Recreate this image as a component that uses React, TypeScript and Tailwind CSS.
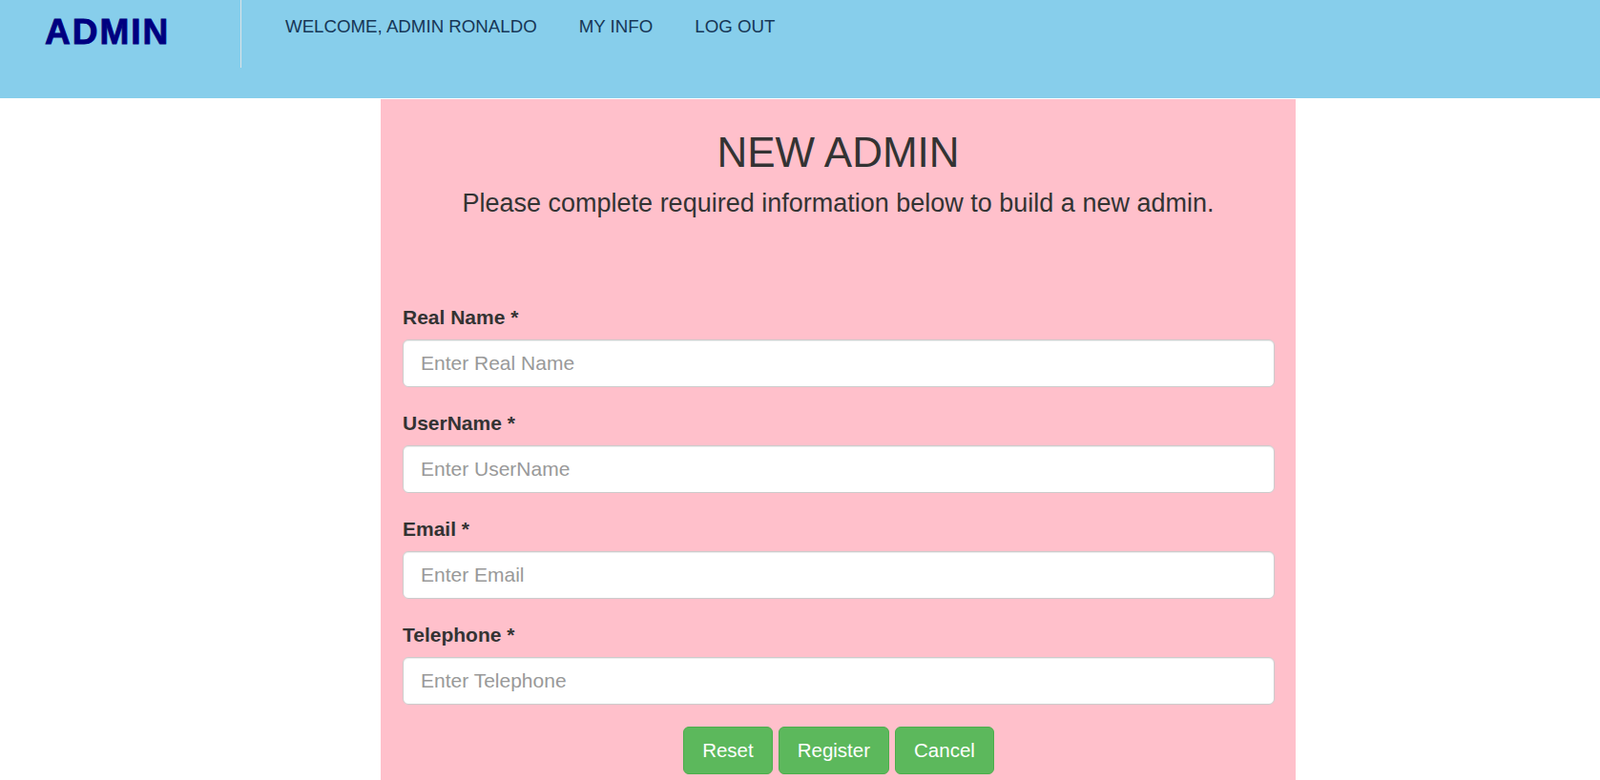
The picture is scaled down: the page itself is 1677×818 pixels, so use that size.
const fields = [
    { label: "Real Name", placeholder: "Enter Real Name" },
    { label: "UserName", placeholder: "Enter UserName" },
    { label: "Email", placeholder: "Enter Email" },
    { label: "Telephone", placeholder: "Enter Telephone" },
];

function Header() {
    return (
        <header className="h-[103px] bg-[#87ceeb] flex items-start">
            {/* logo */}
            <div className="w-[252px] pl-[47px] pt-[14px]">
                <span className="text-[37px] leading-[40px] font-black tracking-[2px] text-[#000080] [-webkit-text-stroke:0.9px_#000080]">
                    ADMIN
                </span>
            </div>
            <div className="w-px h-[71px] bg-[#dde3e6]" />

            {/* nav links */}
            <nav className="flex gap-[44px] pl-[46px] pt-[14px] text-[18.7px] leading-[27px] text-[#163656]">
                <a href="#">WELCOME, ADMIN RONALDO</a>
                <a href="#">MY INFO</a>
                <a href="#">LOG OUT</a>
            </nav>
        </header>
    );
}

export default function App() {
    return (
        <div className="min-h-[818px] bg-white font-['Liberation_Sans',Arial,sans-serif] text-[#333]">
            <Header />

            <div className="pl-[399px] pt-px">
                <main className="w-[959px] min-h-[714px] bg-[#ffc0cb] pt-[32px] px-[22px] pb-[10px]">
                    {/* TITLE */}
                    <div className="text-center">
                        <h1 className="text-[44px] leading-[48px]">NEW ADMIN</h1>
                        <p className="mt-[10px] text-[27px] leading-[38px]">
                            Please complete required information below to build a new admin.
                        </p>
                    </div>

                    {/* FORM */}
                    <form className="mt-[86px] pl-[1px]" onSubmit={(e) => e.preventDefault()}>
                        {fields.map((f) => (
                            <div key={f.label} className="mb-[23px]">
                                <label className="block mb-[8px] text-[21px] leading-[30px] font-bold">
                                    {f.label} *
                                </label>
                                <input
                                    type="text"
                                    placeholder={f.placeholder}
                                    className="block w-full h-[50px] px-[18px] text-[21px] bg-white border border-[#ccc] rounded-[6px] shadow-[inset_0_1px_1px_rgba(0,0,0,0.075)] placeholder:text-[#999] outline-none"
                                />
                            </div>
                        ))}

                        {/* BUTTONS */}
                        <div className="flex justify-center gap-[6px]">
                            <button type="reset" className="h-[50px] px-[19px] text-[20.5px] text-white bg-[#5cb85c] border border-[#4cae4c] rounded-[6px]">
                                Reset
                            </button>
                            <button type="submit" className="h-[50px] px-[19px] text-[20.5px] text-white bg-[#5cb85c] border border-[#4cae4c] rounded-[6px]">
                                Register
                            </button>
                            <button type="button" className="h-[50px] px-[19px] text-[20.5px] text-white bg-[#5cb85c] border border-[#4cae4c] rounded-[6px]">
                                Cancel
                            </button>
                        </div>
                    </form>
                </main>
            </div>
        </div>
    );
}
